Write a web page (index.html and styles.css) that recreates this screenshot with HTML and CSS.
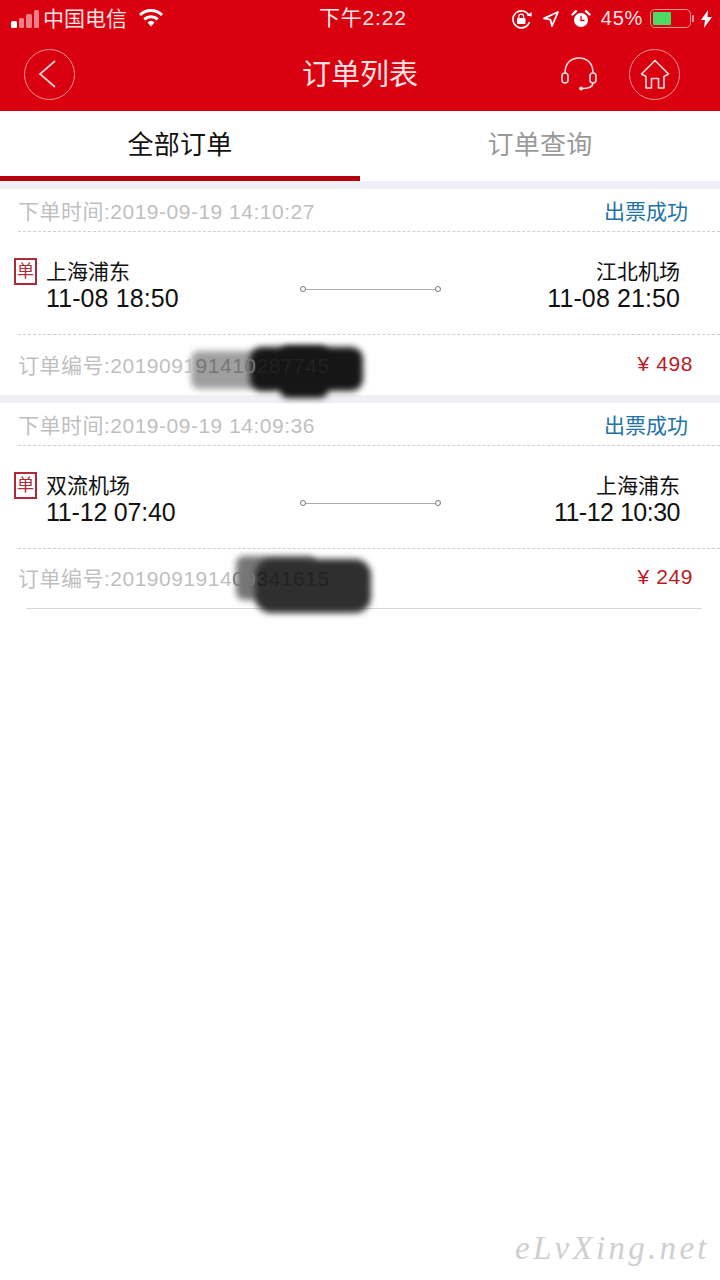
FILE: index.html
```html
<!DOCTYPE html>
<html lang="zh-CN">
<head>
<meta charset="utf-8">
<title>订单列表</title>
<link rel="stylesheet" href="styles.css">
</head>
<body>
<div class="page">
  <header class="header">
    <div class="status">
      <div class="status-left">
        <div class="signal"><i class="s1"></i><i class="s2"></i><i class="s3"></i><i class="s4"></i></div>
        <span class="carrier">中国电信</span>
        <svg class="wifi" width="26" height="18" viewBox="0 0 26 18"><path d="M13 17.500 9.500 13.400a5.200 5.200 0 0 1 7 0Z" fill="#fff"/><path d="M6.300 10.300a9.800 9.800 0 0 1 13.400 0" fill="none" stroke="#fff" stroke-width="3"/><path d="M2 6a15.800 15.800 0 0 1 22 0" fill="none" stroke="#fff" stroke-width="3"/></svg>
      </div>
      <div class="clock">下午2:22</div>
      <div class="status-right">
        <svg width="22" height="20" viewBox="0 0 22 20"><path d="M18 6.500A8.500 8.500 0 1 0 18.500 13" fill="none" stroke="#fff" stroke-width="1.600"/><path d="m15.500 6.500 5 1 .3-4.500Z" fill="#fff"/><rect x="6" y="9" width="8.500" height="6" rx="1" fill="#fff"/><path d="M7.800 9V7.600a2.400 2.400 0 0 1 4.800 0V9" fill="none" stroke="#fff" stroke-width="1.200"/></svg>
        <svg class="loc" width="18" height="18" viewBox="0 0 18 18"><path d="M16 2 2 8.400l6.400 1.200L10 16Z" fill="none" stroke="#fff" stroke-width="1.800" stroke-linejoin="round"/></svg>
        <svg class="alarm" width="20" height="20" viewBox="0 0 20 20"><circle cx="10" cy="11" r="7" fill="#fff"/><path d="M10 7v4.500h3.500" fill="none" stroke="#d9000f" stroke-width="1.300"/><path d="M1.500 5.500 5 2.200M18.500 5.500 15 2.200" stroke="#fff" stroke-width="2.400" stroke-linecap="round"/></svg>
        <span class="pct">45%</span>
        <div class="battery"><div class="battery-fill"></div></div>
        <div class="battery-tip"></div>
        <svg class="bolt" width="11" height="18" viewBox="0 0 11 18"><path d="M7 0 0 10h4l-1 8 8-11H6.500Z" fill="#fff"/></svg>
      </div>
    </div>
    <nav class="nav">
      <div class="round-btn">
        <svg class="chevron" width="20" height="30" viewBox="0 0 20 30"><path d="M17 2 2 15l15 13" fill="none" stroke="#f9d4d6" stroke-width="1.700"/></svg>
      </div>
      <h1 class="title">订单列表</h1>
      <svg class="service" width="36" height="34" viewBox="0 0 36 34"><path d="M4 16C4 6 10 1 18 1s14 5 14 15" fill="none" stroke="#fbdcde" stroke-width="1.600"/><rect x="1" y="16" width="6" height="10" rx="3" fill="none" stroke="#fbdcde" stroke-width="1.600"/><rect x="29" y="16" width="6" height="10" rx="3" fill="none" stroke="#fbdcde" stroke-width="1.600"/><path d="M32 26c0 4-4 5.500-11 5.500" fill="none" stroke="#fbdcde" stroke-width="1.600"/><circle cx="20" cy="31.500" r="2" fill="#fbdcde"/></svg>
      <div class="round-btn">
        <svg width="30" height="30" viewBox="0 0 30 30"><path d="M1.500 15 15 1.500 28.500 15 24 17.500V29h-5.500V19.500h-7V29H6V17.500Z" fill="none" stroke="#fbdcde" stroke-width="1.600" stroke-linejoin="round"/></svg>
      </div>
    </nav>
  </header>

  <div class="tabs">
    <div class="tab tab-on">全部订单</div>
    <div class="tab">订单查询</div>
  </div>

  <section class="order">
    <div class="row-top"><span class="muted">下单时间:2019-09-19 14:10:27</span><span class="state">出票成功</span></div>
    <div class="row-mid">
      <span class="tag">单</span>
      <div class="point"><div class="place">上海浦东</div><div class="when">11-08 18:50</div></div>
      <div class="route"><i class="dot"></i><i class="line"></i><i class="dot"></i></div>
      <div class="point point-end"><div class="place">江北机场</div><div class="when">11-08 21:50</div></div>
    </div>
    <div class="row-bottom">
      <span class="muted">订单编号:2019091<span class="on-gray">91410</span><span class="on-dark">287745</span></span><span class="price">¥ 498</span>
      <div class="smear smear-a1"></div><div class="smear smear-a2"></div><div class="smear smear-a3"></div>
    </div>
  </section>

  <section class="order order-last">
    <div class="row-top"><span class="muted">下单时间:2019-09-19 14:09:36</span><span class="state">出票成功</span></div>
    <div class="row-mid">
      <span class="tag">单</span>
      <div class="point"><div class="place">双流机场</div><div class="when when-a">11-12 07:40</div></div>
      <div class="route"><i class="dot"></i><i class="line"></i><i class="dot"></i></div>
      <div class="point point-end"><div class="place">上海浦东</div><div class="when when-b">11-12 10:30</div></div>
    </div>
    <div class="row-bottom">
      <span class="muted">订单编号:2019091914<span class="on-gray">09</span><span class="on-dark">341615</span></span><span class="price">¥ 249</span>
      <div class="smear smear-b1"></div><div class="smear smear-b2"></div>
    </div>
  </section>
  <div class="end-line"></div>

  <div class="watermark">eLvXing.net</div>
</div>
</body>
</html>
```

FILE: styles.css
```css
* { box-sizing: border-box; margin: 0; padding: 0; }
html, body { background: #fff; }
body { font-family: "Liberation Sans", "Noto Sans CJK SC", sans-serif; }
.page { position: relative; width: 720px; height: 1280px; overflow: hidden; background: #fff; }

.header { background: #d9000f; height: 111px; color: #fff; }
.status { height: 37px; display: flex; align-items: center; justify-content: space-between; position: relative; padding: 0 8px 0 11px; }
.status-left { display: flex; align-items: center; }
.signal { display: flex; align-items: flex-end; gap: 2px; height: 18px; margin-right: 4px; }
.signal i { display: block; width: 5.500px; background: #ef7f86; border-radius: 1.500px; }
.signal .s1 { height: 7px; background: #fff; }
.signal .s2 { height: 10px; }
.signal .s3 { height: 14px; }
.signal .s4 { height: 18px; }
.carrier { font-size: 21px; color: #fbe3e4; margin-top: -3px; }
.wifi { margin-left: 11px; margin-top: -2px; }
.clock { position: absolute; left: 319px; top: 5px; font-size: 21px; line-height: 26px; letter-spacing: .8px; color: #fbe9ea; }
.status-right { display: flex; align-items: center; }
.loc { margin-left: 9px; }
.alarm { margin-left: 11px; }
.pct { font-size: 20px; color: #fbe3e4; margin-left: 10px; letter-spacing: .7px; }
.battery { width: 41px; height: 19px; margin-left: 7px; border: 1.500px solid #f58f95; border-radius: 5px; padding: 2px; }
.battery-fill { width: 18px; height: 100%; background: #4cd964; border-radius: 1px; }
.battery-tip { width: 2px; height: 7px; background: #f58f95; margin-left: 1px; }
.bolt { margin-left: 7px; }

.nav { height: 74px; display: flex; align-items: center; padding: 0 40px 0 24px; position: relative; }
.round-btn { width: 51px; height: 51px; border: 1px solid #f3929a; border-radius: 50%; display: flex; align-items: center; justify-content: center; }
.chevron { margin-right: 4px; }
.title { position: absolute; left: 0; right: 0; top: 18px; text-align: center; font-weight: 400; font-size: 29px; line-height: 40px; color: #fbe3e4; }
.service { margin-left: auto; margin-right: 32px; }

.tabs { display: flex; height: 70px; }
.tab { flex: 1; text-align: center; font-size: 26px; letter-spacing: .2px; line-height: 68px; color: #999; }
.tab-on { color: #111; border-bottom: 5px solid #b4000e; }

.order { margin-top: 8px; background: #fff; box-shadow: 0 -8px 0 #eff0f5; }
.row-top, .row-bottom { position: relative; display: flex; justify-content: space-between; align-items: center; margin-left: 18px; }
.row-top { height: 43px; padding: 0 32px 1px 0; border-bottom: 1px dashed #cfcfcf; }
.row-mid { height: 102px; margin-left: 14px; position: relative; display: flex; align-items: center; padding: 4px 40px 0 0; }
.row-bottom { height: 61px; padding: 0 27px 3px 0; border-top: 1px dashed #cfcfcf; }
.order-last .row-bottom { height: 60px; }
.muted { position: relative; z-index: 1; font-size: 21px; letter-spacing: .5px; color: #bfbfbf; white-space: nowrap; }
.on-gray { color: #777; }
.on-dark { color: #222; }
.state { font-size: 21px; color: #2173a6; }
.price { font-size: 21px; color: #b71c24; letter-spacing: .6px; }
.tag { width: 23px; height: 27px; border: 2px solid #ab2b36; color: #ab2b36; font-size: 17px; line-height: 23px; text-align: center; margin-top: -27px; flex: none; }
.point { width: 180px; margin-left: 9px; }
.point-end { text-align: right; margin-left: auto; }
.place { font-size: 21px; line-height: 26px; color: #111; }
.when { font-size: 25px; line-height: 26px; color: #111; letter-spacing: .1px; }
.when-a { letter-spacing: -.2px; }
.when-b { letter-spacing: -.5px; }
.route { position: absolute; left: 286px; top: 54px; width: 141px; display: flex; align-items: center; }
.dot { width: 6px; height: 6px; border: 1px solid #777; border-radius: 50%; flex: none; }
.line { flex: 1; height: 1px; background: #aaa; }

.smear { position: absolute; border-radius: 8px; }
.smear-a1 { left: 173px; top: 16px; width: 85px; height: 38px; background: #8f8f8f; opacity: .85; filter: blur(3px); }
.smear-a2 { left: 232px; top: 12px; width: 113px; height: 44px; background: #161616; filter: blur(3px); border-radius: 12px; }
.smear-a3 { left: 262px; top: 11px; width: 48px; height: 52px; background: #161616; filter: blur(3px); }
.smear-b1 { left: 218px; top: 7px; width: 80px; height: 44px; background: #5f5f5f; opacity: .85; filter: blur(3px); }
.smear-b2 { left: 237px; top: 10px; width: 116px; height: 54px; background: #2f2f2f; filter: blur(3px); border-radius: 16px; }

.end-line { height: 1px; background: #d8d8d8; margin: 0 18px 0 26px; }
.watermark { position: absolute; left: 515px; top: 1226px; font-family: "Liberation Serif", serif; font-style: italic; font-size: 33px; line-height: 44px; letter-spacing: 3.300px; color: #cfcfcf; }
```
